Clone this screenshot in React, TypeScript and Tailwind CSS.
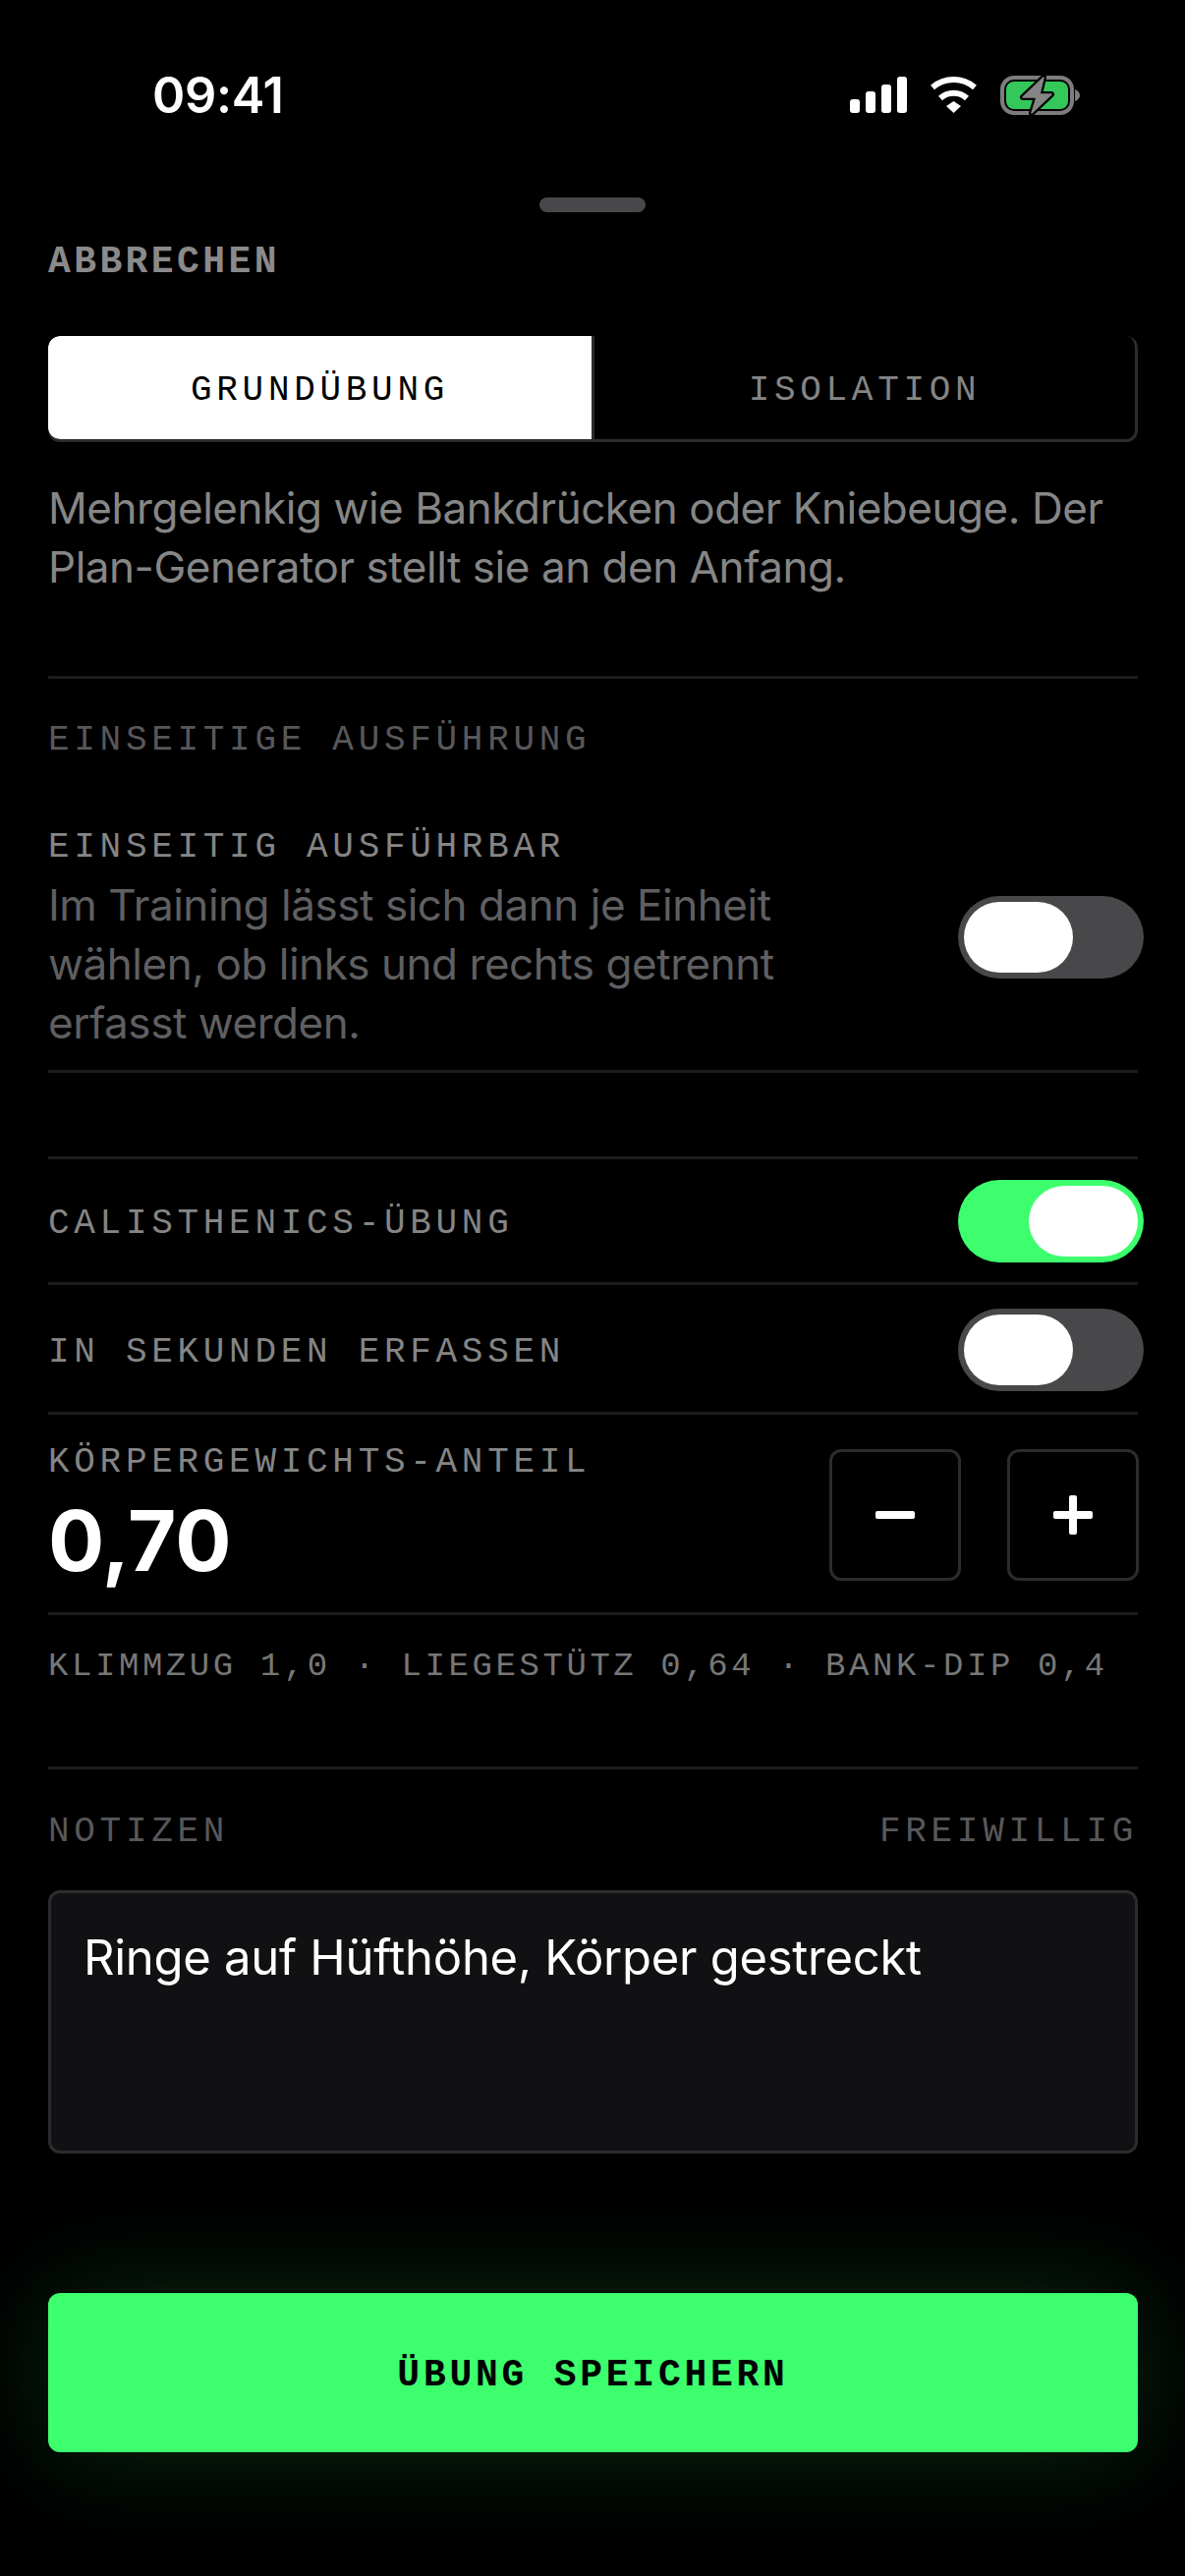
import React from "react";

const mono = "font-['Liberation_Mono',monospace] h-[36px] leading-[41px] whitespace-nowrap";
const label = "text-[36px] tracking-[4.7px]";

function Toggle({ on }: { on?: boolean }) {
  return (
    <div className={`-mr-[6px] flex h-[84px] w-[189px] shrink-0 items-center rounded-[42px] px-[6px] ${on ? "justify-end bg-[#3dff6e]" : "justify-start bg-[#48484a]"}`}>
      <div className="h-[72px] w-[111px] rounded-[36px] bg-white" />
    </div>
  );
}

function StatusIcons() {
  return (
    <svg width="235" height="40" viewBox="865 78 235 40" className="block">
      <g fill="#fff">
        <rect x="865" y="102" width="10" height="14" rx="3" />
        <rect x="881" y="94" width="10" height="22" rx="3" />
        <rect x="897" y="87" width="10" height="29" rx="3" />
        <rect x="913" y="79" width="10" height="37" rx="3" />
        <polygon points="963,109 970.5,104 978,109 970.5,116" />
      </g>
      <g fill="none" stroke="#fff" strokeWidth="6">
        <path d="M949 90 A33 33 0 0 1 992 90" />
        <path d="M957 101 A20 20 0 0 1 984 101" />
      </g>
      <rect x="1020" y="80" width="71" height="36" rx="12" fill="none" stroke="#7d7d7d" strokeWidth="4" />
      <rect x="1024" y="84" width="63" height="28" rx="8" fill="#34c759" />
      <path d="M1094 92 Q1099 94 1099 98 Q1099 102 1094 104 Z" fill="#7d7d7d" />
      <polygon points="1062,80 1041,100 1055,100 1050,116 1070,97 1058,97" fill="#000" stroke="#000" strokeWidth="6" strokeLinejoin="round" />
      <polygon points="1062,80 1041,100 1055,100 1050,116 1070,97 1058,97" fill="#858585" stroke="#858585" strokeWidth="1.5" strokeLinejoin="round" />
    </svg>
  );
}

export default function App() {
  return (
    <div className="h-[2622px] w-[1206px] overflow-hidden bg-black font-['Inter',sans-serif]">
      <div className="flex h-[194px] items-center justify-between pr-[106px] pl-[155px]">
        <span className="text-[50.5px] leading-[60px] font-semibold tracking-[-0.3px] text-white">09:41</span>
        <StatusIcons />
      </div>
      <div className="mx-auto mt-[7px] h-[15px] w-[108px] rounded-[8px] bg-[#48484a]" />
      <div className="mx-[49px] w-[1109px]">
        <div className={`${mono} mt-[30px] text-[38px] font-bold tracking-[3.4px] text-[#8a8a8a]`}>ABBRECHEN</div>

        <div className="mt-[60px] flex h-[108px] overflow-hidden rounded-[12px] border-[3px] border-t-0 border-l-0 border-[#2c2c2e]">
          <div className="flex w-[553px] items-center justify-center rounded-l-[12px] bg-white">
            <div className={`${mono} ${label} text-black`}>GRUNDÜBUNG</div>
          </div>
          <div className="flex flex-1 items-center justify-center border-l-[3px] border-[#2c2c2e]">
            <div className={`${mono} ${label} text-[#858585]`}>ISOLATION</div>
          </div>
        </div>

        <p className="mt-[37px] text-[44px] leading-[60px] tracking-[-0.46px] whitespace-nowrap text-[#868686]">
          Mehrgelenkig wie Bankdrücken oder Kniebeuge. Der
          <br />
          Plan-Generator stellt sie an den Anfang.
        </p>

        <div className="mt-[81px] h-[88px] border-t-[3px] border-[#1c1c1e] pt-[42px]">
          <div className={`${mono} ${label} text-[#58585a]`}>EINSEITIGE AUSFÜHRUNG</div>
        </div>
        <div className="mt-[66px] flex items-center justify-between border-b-[3px] border-[#1c1c1e] pb-[18px]">
          <div>
            <div className={`${mono} ${label} text-[#858585]`}>EINSEITIG AUSFÜHRBAR</div>
            <p className="mt-[13px] w-[800px] text-[44px] leading-[60px] tracking-[-0.46px] text-[#5f5f61]">
              Im Training lässt sich dann je Einheit wählen, ob links und rechts getrennt erfasst werden.
            </p>
          </div>
          <div className="-mt-[5px]">
            <Toggle />
          </div>
        </div>

        <div className="mt-[85px] flex h-[128px] items-center justify-between border-t-[3px] border-[#1c1c1e]">
          <div className={`${mono} ${label} text-[#858585]`}>CALISTHENICS-ÜBUNG</div>
          <Toggle on />
        </div>
        <div className="flex h-[132px] items-center justify-between border-t-[3px] border-[#1c1c1e] pt-[3px]">
          <div className={`${mono} ${label} text-[#858585]`}>IN SEKUNDEN ERFASSEN</div>
          <Toggle />
        </div>

        <div className="flex h-[204px] justify-between border-t-[3px] border-[#1c1c1e]">
          <div className="pt-[28px]">
            <div className={`${mono} ${label} text-[#858585]`}>KÖRPERGEWICHTS-ANTEIL</div>
            <div className="mt-[22px] text-[85px] leading-[85px] font-bold text-white">0,70</div>
          </div>
          <div className="-mr-[1px] flex gap-[47px] pt-[35px]">
            <div className="flex h-[134px] w-[134px] items-center justify-center rounded-[12px] border-[3px] border-[#2c2c2e]">
              <div className="h-[8px] w-[40px] rounded-[2px] bg-white" />
            </div>
            <div className="relative flex h-[134px] w-[134px] items-center justify-center rounded-[12px] border-[3px] border-[#2c2c2e]">
              <div className="h-[8px] w-[40px] rounded-[2px] bg-white" />
              <div className="absolute h-[40px] w-[8px] rounded-[2px] bg-white" />
            </div>
          </div>
        </div>

        <div className="h-[157px] border-t-[3px] border-[#1c1c1e] pt-[32px]">
          <div className={`${mono} text-[34px] tracking-[3.57px] text-[#777777]`}>KLIMMZUG 1,0 · LIEGESTÜTZ 0,64 · BANK-DIP 0,4</div>
        </div>

        <div className="flex justify-between border-t-[3px] border-[#1c1c1e] pt-[43px]">
          <div className={`${mono} ${label} text-[#58585a]`}>NOTIZEN</div>
          <div className={`${mono} ${label} text-[#58585a]`}>FREIWILLIG</div>
        </div>

        <div className="mt-[44px] h-[268px] rounded-[12px] border-[3px] border-[#2c2c2e] bg-[#111113] px-[33px] pt-[36px] text-[49px] leading-[60px] tracking-[-0.28px] text-white">
          Ringe auf Hüfthöhe, Körper gestreckt
        </div>

        <div className="mt-[142px] flex h-[162px] items-center justify-center rounded-[12px] bg-[#3dff6e] shadow-[0_0_110px_rgba(61,255,110,0.16)]">
          <div className={`${mono} text-[38px] font-bold tracking-[3.75px] text-black`}>ÜBUNG SPEICHERN</div>
        </div>
      </div>
    </div>
  );
}
